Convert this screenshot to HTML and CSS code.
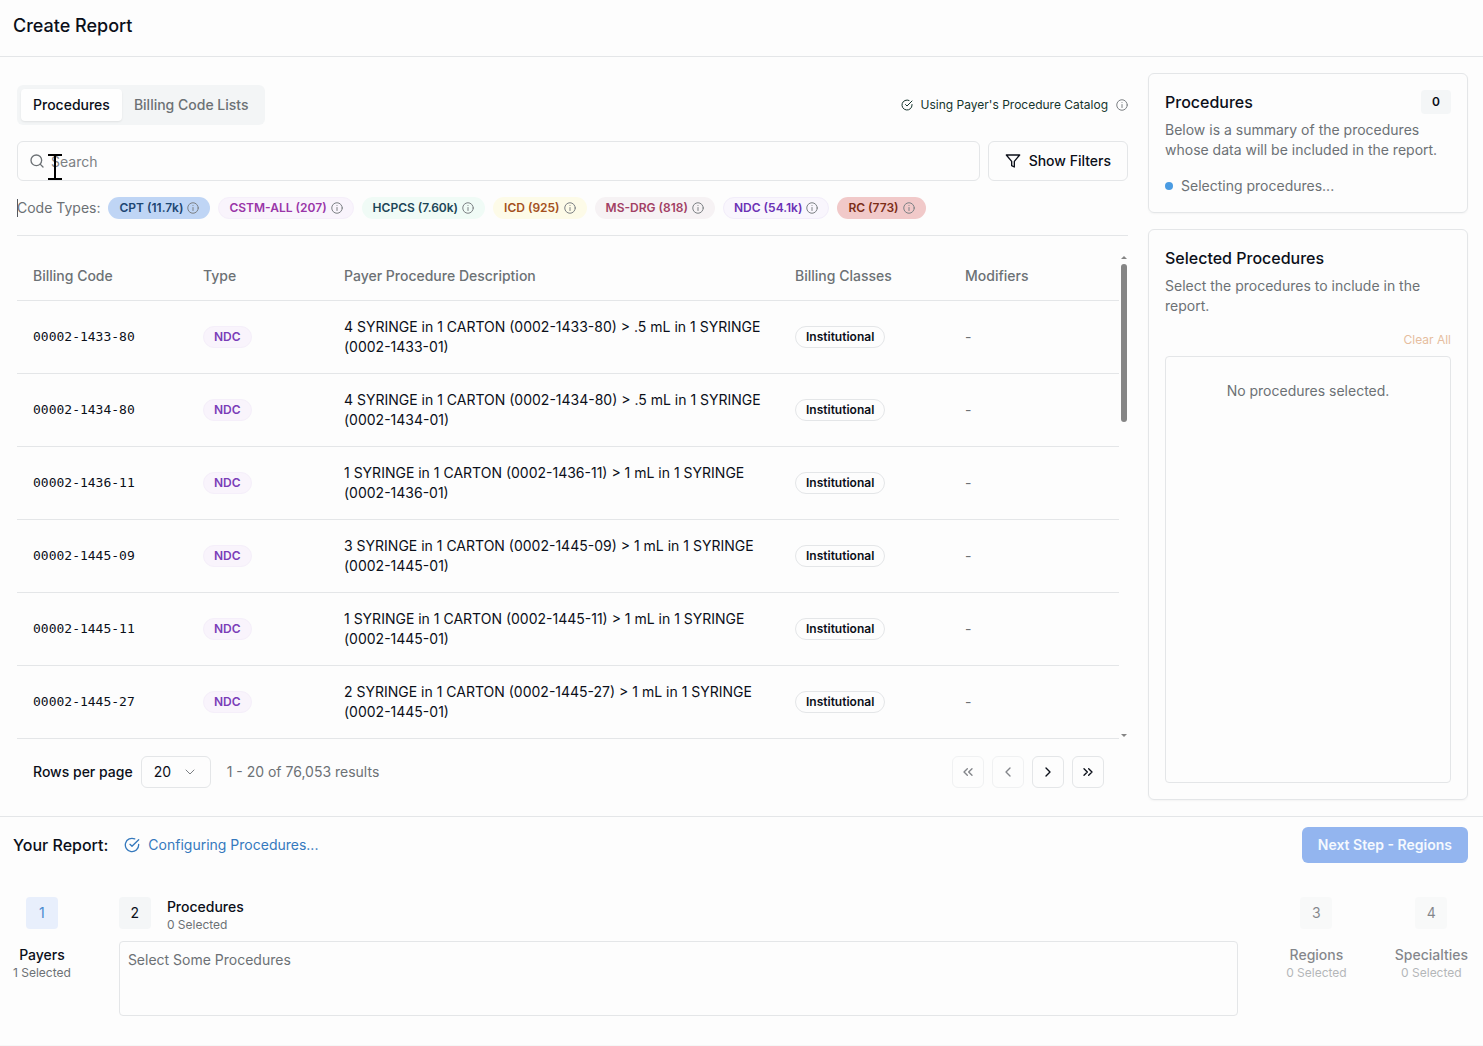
FILE: index.html
```html
<!DOCTYPE html>
<html lang="en">
<head>
    <meta charset="UTF-8">
    <meta name="viewport" content="width=device-width, initial-scale=1.0">
    <title>Create Report</title>
    <link rel="stylesheet" href="styles.css">
</head>
<body>
    <!-- Shared icons -->
    <svg class="sprite" aria-hidden="true">
        <symbol id="info" viewBox="0 0 24 24"><circle cx="12" cy="12" r="10.5"/><path d="M12 17v-6M12 7h.01"/></symbol>
        <symbol id="check" viewBox="0 0 24 24"><path d="M22 11.08V12a10 10 0 1 1-5.93-9.14"/><path d="m9 11 3 3L22 4"/></symbol>
    </svg>

    <header class="page-header">
        <h1 class="page-title">Create Report</h1>
    </header>

    <main class="main">
        <section class="catalog">
            <div class="catalog-top">
                <div class="tabs" role="tablist">
                    <button class="tab active" type="button" role="tab" aria-selected="true">Procedures</button>
                    <button class="tab" type="button" role="tab" aria-selected="false">Billing Code Lists</button>
                </div>
                <div class="catalog-note">
                    <svg class="icon icon-sm"><use href="#check"/></svg>
                    <span>Using Payer's Procedure Catalog</span>
                    <svg class="icon icon-sm muted"><use href="#info"/></svg>
                </div>
            </div>

            <div class="search-row">
                <div class="search-box">
                    <svg class="icon search-icon" viewBox="0 0 24 24"><circle cx="11" cy="11" r="8"/><path d="m21 21-4.3-4.3"/></svg>
                    <input class="search-input" type="text" placeholder="Search" aria-label="Search">
                    <svg class="pointer" viewBox="0 0 14 26"><path d="M0 1h14M0 25h14M7 1v24"/></svg>
                </div>
                <button class="filter-btn" type="button">
                    <svg class="icon" viewBox="0 0 24 24"><path d="M22 3H2l8 9.46V19l4 2v-8.54L22 3z"/></svg>
                    Show Filters
                </button>
            </div>

            <div class="code-types">
                <span class="code-label">Code Types:</span>
                <button class="chip chip-cpt" type="button">CPT (11.7k)<svg class="icon icon-sm muted"><use href="#info"/></svg></button>
                <button class="chip chip-cstm" type="button">CSTM-ALL (207)<svg class="icon icon-sm muted"><use href="#info"/></svg></button>
                <button class="chip chip-hcpcs" type="button">HCPCS (7.60k)<svg class="icon icon-sm muted"><use href="#info"/></svg></button>
                <button class="chip chip-icd" type="button">ICD (925)<svg class="icon icon-sm muted"><use href="#info"/></svg></button>
                <button class="chip chip-drg" type="button">MS-DRG (818)<svg class="icon icon-sm muted"><use href="#info"/></svg></button>
                <button class="chip chip-ndc" type="button">NDC (54.1k)<svg class="icon icon-sm muted"><use href="#info"/></svg></button>
                <button class="chip chip-rc" type="button">RC (773)<svg class="icon icon-sm muted"><use href="#info"/></svg></button>
            </div>

            <div class="table-area">
                <table class="table">
                    <colgroup>
                        <col class="col-code">
                        <col class="col-type">
                        <col class="col-desc">
                        <col class="col-class">
                        <col class="col-mod">
                    </colgroup>
                    <thead>
                        <tr>
                            <th>Billing Code</th>
                            <th>Type</th>
                            <th>Payer Procedure Description</th>
                            <th>Billing Classes</th>
                            <th>Modifiers</th>
                        </tr>
                    </thead>
                    <tbody>
                        <tr>
                            <td class="code">00002-1433-80</td>
                            <td><span class="badge badge-ndc">NDC</span></td>
                            <td>4 SYRINGE in 1 CARTON (0002-1433-80) &gt; .5 mL in 1 SYRINGE (0002-1433-01)</td>
                            <td><span class="badge">Institutional</span></td>
                            <td class="dash">-</td>
                        </tr>
                        <tr>
                            <td class="code">00002-1434-80</td>
                            <td><span class="badge badge-ndc">NDC</span></td>
                            <td>4 SYRINGE in 1 CARTON (0002-1434-80) &gt; .5 mL in 1 SYRINGE (0002-1434-01)</td>
                            <td><span class="badge">Institutional</span></td>
                            <td class="dash">-</td>
                        </tr>
                        <tr>
                            <td class="code">00002-1436-11</td>
                            <td><span class="badge badge-ndc">NDC</span></td>
                            <td>1 SYRINGE in 1 CARTON (0002-1436-11) &gt; 1 mL in 1 SYRINGE (0002-1436-01)</td>
                            <td><span class="badge">Institutional</span></td>
                            <td class="dash">-</td>
                        </tr>
                        <tr>
                            <td class="code">00002-1445-09</td>
                            <td><span class="badge badge-ndc">NDC</span></td>
                            <td>3 SYRINGE in 1 CARTON (0002-1445-09) &gt; 1 mL in 1 SYRINGE (0002-1445-01)</td>
                            <td><span class="badge">Institutional</span></td>
                            <td class="dash">-</td>
                        </tr>
                        <tr>
                            <td class="code">00002-1445-11</td>
                            <td><span class="badge badge-ndc">NDC</span></td>
                            <td>1 SYRINGE in 1 CARTON (0002-1445-11) &gt; 1 mL in 1 SYRINGE (0002-1445-01)</td>
                            <td><span class="badge">Institutional</span></td>
                            <td class="dash">-</td>
                        </tr>
                        <tr>
                            <td class="code">00002-1445-27</td>
                            <td><span class="badge badge-ndc">NDC</span></td>
                            <td>2 SYRINGE in 1 CARTON (0002-1445-27) &gt; 1 mL in 1 SYRINGE (0002-1445-01)</td>
                            <td><span class="badge">Institutional</span></td>
                            <td class="dash">-</td>
                        </tr>
                    </tbody>
                </table>
                <div class="scrollbar" aria-hidden="true">
                    <span class="arrow-up"></span>
                    <span class="scroll-thumb"></span>
                    <span class="arrow-down"></span>
                </div>
            </div>

            <div class="pagination">
                <label class="rows-label" for="rowsPerPage">Rows per page</label>
                <div class="select-wrap">
                    <select class="rows-select" id="rowsPerPage">
                        <option>10</option>
                        <option selected>20</option>
                        <option>50</option>
                    </select>
                    <svg class="icon icon-sm select-arrow" viewBox="0 0 24 24"><path d="m4 8 8 8 8-8"/></svg>
                </div>
                <span class="results">1 - 20 of 76,053 results</span>
                <div class="pager">
                    <button class="pager-btn" type="button" aria-label="First page" disabled><svg class="icon" viewBox="0 0 24 24"><path d="m11 17-5-5 5-5M18 17l-5-5 5-5"/></svg></button>
                    <button class="pager-btn" type="button" aria-label="Previous page" disabled><svg class="icon" viewBox="0 0 24 24"><path d="m15 18-6-6 6-6"/></svg></button>
                    <button class="pager-btn" type="button" aria-label="Next page"><svg class="icon" viewBox="0 0 24 24"><path d="m9 18 6-6-6-6"/></svg></button>
                    <button class="pager-btn" type="button" aria-label="Last page"><svg class="icon" viewBox="0 0 24 24"><path d="m6 17 5-5-5-5M13 17l5-5-5-5"/></svg></button>
                </div>
            </div>
        </section>

        <aside class="sidebar">
            <section class="card">
                <div class="card-head">
                    <h2 class="card-title">Procedures</h2>
                    <span class="count">0</span>
                </div>
                <p class="card-text">Below is a summary of the procedures whose data will be included in the report.</p>
                <p class="status"><span class="status-dot"></span>Selecting procedures...</p>
            </section>

            <section class="card card-selected">
                <div class="card-head">
                    <h2 class="card-title">Selected Procedures</h2>
                </div>
                <p class="card-text">Select the procedures to include in the report.</p>
                <button class="clear-btn" type="button" disabled>Clear All</button>
                <div class="selected-list">No procedures selected.</div>
            </section>
        </aside>
    </main>

    <footer class="report">
        <div class="report-head">
            <h2 class="report-title">Your Report:</h2>
            <div class="report-status">
                <svg class="icon"><use href="#check"/></svg>
                <span>Configuring Procedures...</span>
            </div>
            <button class="next-btn" type="button" disabled>Next Step - Regions</button>
        </div>

        <div class="steps">
            <div class="step done">
                <span class="step-number">1</span>
                <div class="step-info">
                    <div class="step-name">Payers</div>
                    <div class="step-count">1 Selected</div>
                </div>
            </div>
            <div class="step current">
                <div class="step-head">
                    <span class="step-number">2</span>
                    <div class="step-info">
                        <div class="step-name">Procedures</div>
                        <div class="step-count">0 Selected</div>
                    </div>
                </div>
                <div class="step-body">Select Some Procedures</div>
            </div>
            <div class="step upcoming">
                <span class="step-number">3</span>
                <div class="step-info">
                    <div class="step-name">Regions</div>
                    <div class="step-count">0 Selected</div>
                </div>
            </div>
            <div class="step upcoming">
                <span class="step-number">4</span>
                <div class="step-info">
                    <div class="step-name">Specialties</div>
                    <div class="step-count">0 Selected</div>
                </div>
            </div>
        </div>
    </footer>
</body>
</html>
```

FILE: styles.css
```css
* {
    margin: 0;
    padding: 0;
    box-sizing: border-box;
}

body {
    display: flex;
    flex-direction: column;
    min-height: 100vh;
    font-family: Inter, "Liberation Sans", sans-serif;
    font-size: 14px;
    line-height: 20px;
    color: #0b0f19;
    background: #fdfdfd;
}

button,
input,
select {
    font: inherit;
    color: inherit;
}

button {
    border: none;
    background: none;
}

.sprite {
    display: none;
}

.icon {
    width: 16px;
    height: 16px;
    flex-shrink: 0;
    fill: none;
    stroke: currentColor;
    stroke-width: 2;
    stroke-linecap: round;
    stroke-linejoin: round;
}

.icon-sm {
    width: 12px;
    height: 12px;
}

.muted {
    color: #7c8084;
}

/* Header */
.page-header {
    padding: 12px 13px;
    height: 57px;
    border-bottom: 1px solid #e4e6e8;
}

.page-title {
    font-size: 18px;
    line-height: 28px;
    font-weight: 500;
}

/* Main area */
.main {
    flex: 1;
    display: flex;
    gap: 20px;
    padding: 16px 15px 16px 17px;
}

.catalog {
    flex: 1;
    display: flex;
    flex-direction: column;
    padding-top: 12px;
}

.catalog-top {
    display: flex;
    justify-content: space-between;
    align-items: center;
    margin-bottom: 16px;
}

.tabs {
    display: flex;
    padding: 4px;
    border-radius: 6px;
    background: #f3f5f6;
}

.tab {
    padding: 6px 12px;
    border-radius: 4px;
    font-weight: 500;
    color: #6c7175;
}

.tab.active {
    color: #0b0f19;
    background: #fefefe;
    box-shadow: 0 1px 2px rgba(0, 0, 0, 0.08);
}

.catalog-note {
    display: flex;
    align-items: center;
    gap: 8px;
    font-size: 12px;
    color: #14342c;
}

.search-row {
    display: flex;
    gap: 8px;
    margin-bottom: 16px;
}

.search-box {
    position: relative;
    flex: 1;
    display: flex;
    align-items: center;
    gap: 6px;
    height: 40px;
    padding: 0 11px;
    border: 1px solid #e4e6e8;
    border-radius: 6px;
}

.search-icon {
    color: #6c7175;
}

.search-input {
    flex: 1;
    height: 38px;
    padding-top: 1px;
    border: none;
    outline: none;
    background: none;
}

.search-input::placeholder {
    color: #7c8084;
}

/* Mouse pointer over the search field */
.pointer {
    position: absolute;
    left: 30px;
    top: 12px;
    width: 14px;
    height: 26px;
    fill: none;
    stroke: #000000;
    stroke-width: 2;
}

.filter-btn {
    display: flex;
    align-items: center;
    gap: 8px;
    padding: 0 16px;
    border: 1px solid #e4e6e8;
    border-radius: 6px;
    font-weight: 500;
}

.code-types {
    display: flex;
    align-items: center;
    gap: 8px;
    padding-bottom: 16px;
    border-bottom: 1px solid #e4e6e8;
}

/* Text caret sits right at the first letter */
.code-label {
    box-shadow: inset 1px 0 0 #55595e;
    line-height: 18px;
    color: #6c7175;
}

.chip {
    display: flex;
    align-items: center;
    gap: 4px;
    padding: 2px 10px;
    border: 1px solid transparent;
    border-radius: 11px;
    font-size: 12px;
    line-height: 16px;
    font-weight: 600;
    height: 22px;
}

.chip-cpt {
    color: #1d4672;
    background: #bfd5f5;
}

.chip-cstm {
    color: #9a35a8;
    background: #f9f4fc;
    border-color: #f5effa;
}

.chip-hcpcs {
    color: #1c4657;
    background: #f0fbf6;
}

.chip-icd {
    color: #a4501d;
    background: #fdfbe8;
}

.chip-drg {
    color: #a23f64;
    background: #f6f2f4;
}

.chip-ndc {
    color: #6b31b5;
    background: #f9f6fd;
    border-color: #f2edfa;
}

.chip-rc {
    color: #7c2d17;
    background: #f1c9c9;
}

/* Table */
.table-area {
    display: flex;
}

.table {
    flex: 1;
    table-layout: fixed;
    width: 100%;
    border-collapse: separate;
    border-spacing: 0;
}

.col-code,
.col-class,
.col-mod {
    width: 170px;
}

.col-type {
    width: 141px;
}

.table th,
.table td {
    padding: 16px;
    text-align: left;
    vertical-align: middle;
    border-bottom: 1px solid #e4e6e8;
}

.table th {
    padding: 30px 16px 14px;
    font-weight: 500;
    color: #6c7175;
}

.table .code {
    font-family: "DejaVu Sans Mono", monospace;
    font-size: 13px;
}

.table .dash {
    color: #6c7175;
}

.badge {
    display: inline-block;
    padding: 2px 10px;
    border: 1px solid #e4e6e8;
    border-radius: 11px;
    font-size: 12px;
    line-height: 16px;
    font-weight: 600;
}

.badge-ndc {
    color: #7a3db8;
    background: #f9f4fc;
    border-color: #f5effa;
}

.scrollbar {
    display: flex;
    flex-direction: column;
    align-items: center;
    width: 9px;
    padding: 20px 0 2px;
}

.arrow-up {
    border: 3px solid transparent;
    border-top: none;
    border-bottom-color: #858585;
}

.arrow-down {
    margin-top: auto;
    border: 3px solid transparent;
    border-bottom: none;
    border-top-color: #858585;
}

.scroll-thumb {
    width: 6px;
    height: 158px;
    margin-top: 5px;
    border-radius: 3px;
    background: #858585;
}

/* Pagination */
.pagination {
    display: flex;
    align-items: center;
    padding: 17px 24px 0 16px;
}

.rows-label {
    font-weight: 500;
}

.select-wrap {
    position: relative;
    margin: 0 16px 0 8px;
}

.rows-select {
    appearance: none;
    width: 70px;
    height: 32px;
    padding: 0 12px;
    border: 1px solid #e4e6e8;
    border-radius: 6px;
    background: none;
}

.select-arrow {
    position: absolute;
    right: 15px;
    top: 10px;
    color: #7c8084;
    pointer-events: none;
}

.results {
    color: #6c7175;
}

.pager {
    display: flex;
    gap: 8px;
    margin-left: auto;
}

.pager-btn {
    display: flex;
    align-items: center;
    justify-content: center;
    width: 32px;
    height: 32px;
    border: 1px solid #e4e6e8;
    border-radius: 6px;
}

.pager-btn:disabled {
    opacity: 0.5;
}

/* Sidebar */
.sidebar {
    display: flex;
    flex-direction: column;
    gap: 16px;
    width: 320px;
}

.card {
    padding: 16px;
    border: 1px solid #e4e6e8;
    border-radius: 6px;
    box-shadow: 0 1px 2px rgba(0, 0, 0, 0.04);
}

.card-head {
    display: flex;
    align-items: center;
    justify-content: space-between;
    height: 24px;
    margin-bottom: 6px;
}

.card-title {
    font-size: 16px;
    line-height: 24px;
    font-weight: 500;
}

.count {
    padding: 4px 11px;
    border-radius: 4px;
    font-size: 12px;
    line-height: 16px;
    font-weight: 600;
    background: #f4f6f7;
}

.card-text {
    color: #6c7175;
}

.status {
    display: flex;
    align-items: center;
    gap: 8px;
    margin-top: 16px;
    color: #6c7175;
}

.status-dot {
    width: 8px;
    height: 8px;
    border-radius: 50%;
    background: #4a9be2;
}

.card-selected {
    flex: 1;
    display: flex;
    flex-direction: column;
}

.clear-btn {
    align-self: flex-end;
    margin: 16px 0 8px;
    font-size: 12px;
    line-height: 16px;
    color: #e6bd9f;
}

.selected-list {
    flex: 1;
    padding: 24px 16px;
    border: 1px solid #e4e6e8;
    border-radius: 4px;
    text-align: center;
    color: #6c7175;
}

/* Report footer */
.report {
    padding: 10px 15px 29px 13px;
    border-top: 1px solid #e4e6e8;
    border-bottom: 1px solid #f6f7f7;
}

.report-head {
    display: flex;
    align-items: center;
    gap: 16px;
    margin-bottom: 34px;
}

.report-title {
    font-size: 16px;
    line-height: 24px;
    font-weight: 500;
}

.report-status {
    display: flex;
    align-items: center;
    gap: 8px;
    color: #3579bd;
}

.next-btn {
    height: 36px;
    margin-left: auto;
    padding: 0 16px;
    border-radius: 6px;
    font-weight: 600;
    color: #f5f9fe;
    background: #93b5ef;
}

.steps {
    display: flex;
    align-items: flex-start;
    gap: 48px;
}

.step {
    display: flex;
    flex-direction: column;
    align-items: center;
    gap: 16px;
    text-align: center;
}

.step-number {
    width: 32px;
    border-radius: 4px;
    line-height: 32px;
    text-align: center;
    background: #f4f6f7;
}

.step-name {
    font-weight: 500;
}

.step-count {
    font-size: 12px;
    line-height: 16px;
    color: #6c7175;
}

.step.done .step-number {
    color: #4a8bd0;
    background: #e8effc;
}

.step.upcoming {
    opacity: 0.5;
}

.step.current {
    flex: 1;
    align-items: stretch;
    gap: 8px;
    text-align: left;
}

.step-head {
    display: flex;
    align-items: flex-start;
    gap: 16px;
}

.step-body {
    min-height: 75px;
    padding: 8px;
    border: 1px solid #e4e6e8;
    border-radius: 4px;
    color: #6c7175;
}
```
